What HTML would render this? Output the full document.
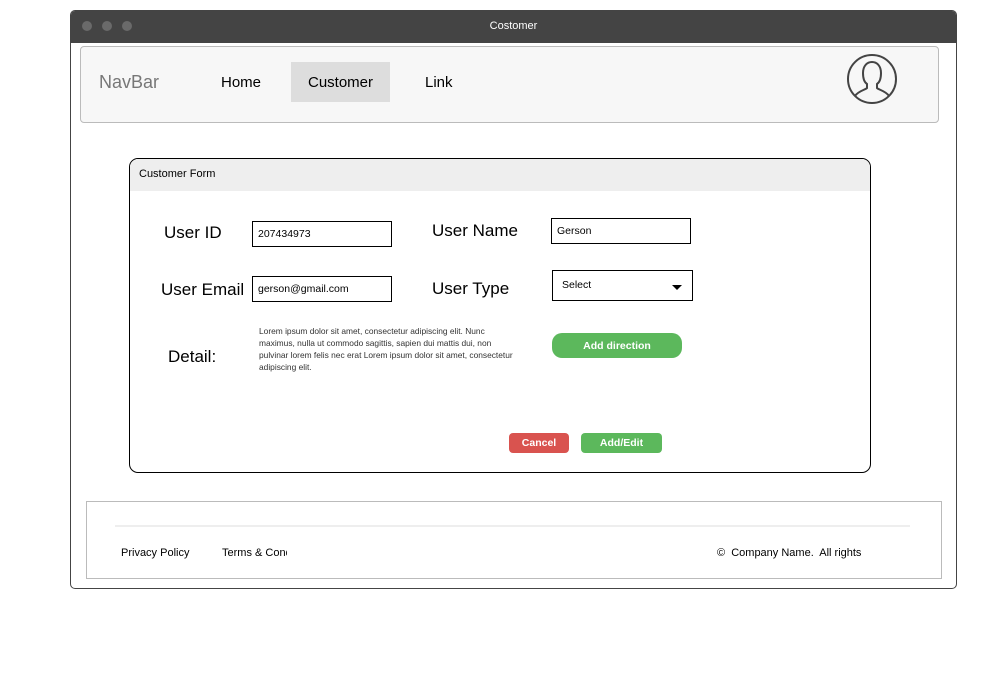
<!DOCTYPE html>
<html><head><meta charset="utf-8"><style>
*{box-sizing:border-box;margin:0;padding:0}
body{width:1006px;height:698px;background:#fff;font-family:"Liberation Sans","DejaVu Sans",sans-serif;position:relative;overflow:hidden;color:#000}
.a{position:absolute}
.win{left:70px;top:10px;width:887px;height:579px;border:1px solid #444;border-radius:5px;overflow:hidden}
.title{left:0;top:0;width:100%;height:32px;background:#444;color:#fff;font-size:11px;text-align:center;line-height:31px}
.dot{width:10px;height:10px;border-radius:50%;background:#6a6a6a;top:10px}
.nav{left:80px;top:46px;width:859px;height:77px;background:#f7f7f7;border:1px solid #bbb;border-radius:4px}
.nt{font-size:15px;top:74px}
.inp{border:1px solid #000;background:#fff;font-size:10.5px;padding-left:5px;display:flex;align-items:center}
.lbl{font-size:17px}
.btn{color:#fff;font-weight:bold;font-size:10.5px;text-align:center;border-radius:6px}
</style></head><body>
<div class="a win">
  <div class="a title">Costomer</div>
  <div class="a dot" style="left:11px"></div>
  <div class="a dot" style="left:31px"></div>
  <div class="a dot" style="left:51px"></div>
</div>
<div class="a nav"></div>
<div class="a" style="left:99px;top:72px;font-size:18px;color:#777">NavBar</div>
<div class="a nt" style="left:221px">Home</div>
<div class="a" style="left:291px;top:62px;width:99px;height:40px;background:#ddd"></div>
<div class="a nt" style="left:308px">Customer</div>
<div class="a nt" style="left:425px">Link</div>
<svg class="a" style="left:846px;top:53px" width="52" height="52" viewBox="0 0 52 52" fill="none" stroke="#444" stroke-width="2">
<circle cx="26" cy="26" r="24"/>
<path d="M9 43 C12 38 19 37 21 35 L21 31 C18 29 17 25 17 20 C17 13 21 9 26 9 C31 9 35 13 35 20 C35 25 34 29 31 31 L31 35 C33 37 40 38 43 43"/>
</svg>

<div class="a" style="left:129px;top:158px;width:742px;height:315px;border:1px solid #000;border-radius:9px;overflow:hidden">
  <div class="a" style="left:0;top:0;width:100%;height:32px;background:#eee;font-size:11px;line-height:31px;padding-left:9px">Customer Form</div>
</div>
<div class="a lbl" style="left:164px;top:223px">User ID</div>
<div class="a inp" style="left:252px;top:221px;width:140px;height:26px">207434973</div>
<div class="a lbl" style="left:432px;top:221px">User Name</div>
<div class="a inp" style="left:551px;top:218px;width:140px;height:26px">Gerson</div>
<div class="a lbl" style="left:161px;top:280px">User Email</div>
<div class="a inp" style="left:252px;top:276px;width:140px;height:26px">gerson@gmail.com</div>
<div class="a lbl" style="left:432px;top:279px">User Type</div>
<div class="a inp" style="left:552px;top:270px;width:141px;height:31px;padding-left:9px;padding-bottom:2px">Select</div>
<div class="a" style="left:672px;top:285px;width:0;height:0;border-left:5px solid transparent;border-right:5px solid transparent;border-top:5px solid #000"></div>
<div class="a lbl" style="left:168px;top:347px">Detail:</div>
<div class="a" style="left:259px;top:325px;width:262px;font-size:8.4px;line-height:12px;color:#333">Lorem ipsum dolor sit amet, consectetur adipiscing elit. Nunc maximus, nulla ut commodo sagittis, sapien dui mattis dui, non pulvinar lorem felis nec erat Lorem ipsum dolor sit amet, consectetur adipiscing elit.</div>
<div class="a btn" style="left:552px;top:333px;width:130px;height:25px;line-height:26px;background:#5cb85c;border-radius:10px">Add direction</div>
<div class="a btn" style="left:509px;top:433px;width:60px;height:20px;line-height:21px;background:#d9534f;border-radius:4px">Cancel</div>
<div class="a btn" style="left:581px;top:433px;width:81px;height:20px;line-height:21px;background:#5cb85c;border-radius:4px">Add/Edit</div>

<div class="a" style="left:86px;top:501px;width:856px;height:78px;border:1px solid #bbb"></div>
<div class="a" style="left:115px;top:525px;width:795px;height:2px;background:#eee"></div>
<div class="a" style="left:121px;top:547px;font-size:11px">Privacy Policy</div>
<div class="a" style="left:222px;top:547px;font-size:11px;width:65px;overflow:hidden;white-space:nowrap">Terms &amp; Conditions</div>
<div class="a" style="left:717px;top:547px;font-size:11px">©&nbsp; Company Name.&nbsp; All rights</div>
</body></html>
